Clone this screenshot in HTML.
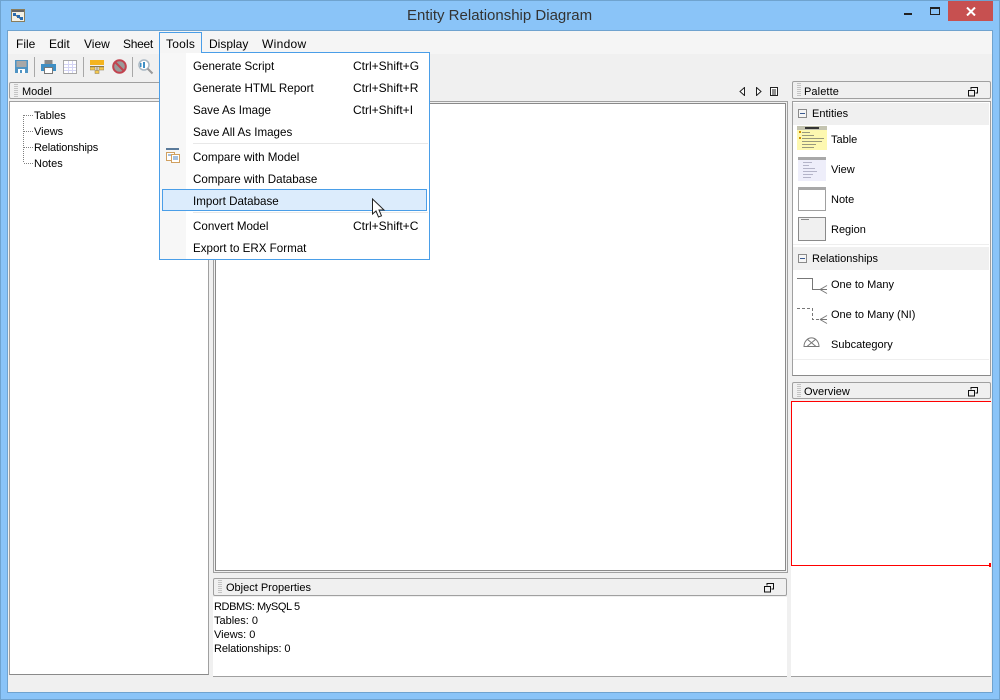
<!DOCTYPE html>
<html><head><meta charset="utf-8"><title>Entity Relationship Diagram</title>
<style>
html,body{margin:0;padding:0}
body{width:1000px;height:700px;position:relative;overflow:hidden;background:#8ac4f8;font-family:"Liberation Sans",sans-serif;font-size:12px;color:#000}
div,span,svg{position:absolute;box-sizing:border-box}
span{white-space:nowrap;line-height:16px;height:16px}
.s{font-size:11px;margin-top:1px}
.m{font-size:11.6px;margin-top:1px}
.h{background:#f0f0f0;border:1px solid #a0a0a0;border-radius:2px}
.grip{width:4px;background:repeating-linear-gradient(#c4c4c4 0 1px,#f0f0f0 1px 2px)}
.sep{width:1px;height:20px;top:57px;background:#a8a8a8}
</style></head><body>
<div style="left:0;top:0;width:1000px;height:700px;border:1px solid #6fa3cf"></div>
<svg style="left:11px;top:9px" width="14" height="13" viewBox="0 0 14 13"><rect x=".5" y=".5" width="13" height="12" fill="#f4f1e6" stroke="#8a7d5c"/><rect x="1" y="1" width="12" height="2" fill="#666"/><path d="M3 5l4 3 3 2" stroke="#444" fill="none"/><rect x="2" y="4" width="3" height="3" fill="#2a6cb0"/><rect x="6" y="6" width="3" height="3" fill="#2a6cb0"/><rect x="9" y="8" width="3" height="3" fill="#2a6cb0"/></svg>
<span style="left:407px;top:7px;font-size:15px;color:#333;line-height:18px;height:18px;letter-spacing:0">Entity Relationship Diagram</span>
<div style="left:904px;top:13px;width:8px;height:2px;background:#222"></div>
<div style="left:930px;top:7px;width:10px;height:8px;border:1px solid #222;border-top-width:2px"></div>
<div style="left:948px;top:1px;width:45px;height:20px;background:#c75050"></div>
<svg style="left:966px;top:7px" width="10" height="9" viewBox="0 0 10 9"><path d="M1 .5l8 8M9 .5l-8 8" stroke="#fff" stroke-width="2"/></svg>

<div style="left:7px;top:30px;width:986px;height:663px;background:#f0f0f0;border:1px solid #6fa3cf"></div>
<div style="left:8px;top:31px;width:984px;height:23px;background:#f5f5f5"></div>

<span style="left:16px;top:36px">File</span>
<span style="left:49px;top:36px">Edit</span>
<span style="left:84px;top:36px">View</span>
<span style="left:123px;top:36px;letter-spacing:-.3px">Sheet</span>
<span style="left:209px;top:36px">Display</span>
<span style="left:262px;top:36px;letter-spacing:.3px">Window</span>

<svg style="left:15px;top:60px" width="13" height="13" viewBox="0 0 13 13"><path d="M0 0h13v13H0z" fill="#4f94c4"/><rect x="1.500" y="1" width="10" height="6" fill="#a8a8a8"/><rect x="3" y="9" width="7" height="4" fill="#fff"/><rect x="5" y="10" width="2" height="3" fill="#4f94c4"/></svg>
<div class="sep" style="left:34px"></div>
<svg style="left:41px;top:60px" width="15" height="14" viewBox="0 0 15 14"><rect x="3.500" y="0" width="8" height="4" fill="#8a8a8a"/><rect x="0" y="4" width="15" height="7" fill="#3f8fc4"/><rect x="3.500" y="7.500" width="8" height="6" fill="#fff" stroke="#777"/></svg>
<svg style="left:63px;top:60px" width="14" height="14" viewBox="0 0 14 14"><rect x=".5" y=".5" width="13" height="13" fill="#fff" stroke="#a8a8a8"/><path d="M1 4.500h12M1 7.500h12M1 10.500h12M5.500 1v12M9.500 1v12" stroke="#d4d4f4"/></svg>
<div class="sep" style="left:83px"></div>
<svg style="left:90px;top:60px" width="14" height="14" viewBox="0 0 14 14"><rect x="0" y="0" width="14" height="5" fill="#f4b41e"/><path d="M0 6.500h14M7 6v5" stroke="#8a7a50"/><rect x="0" y="7" width="5" height="3" fill="#f4c84e" stroke="#8a7a50" stroke-width=".5"/><rect x="9" y="7" width="5" height="3" fill="#f4c84e" stroke="#8a7a50" stroke-width=".5"/><rect x="5" y="10.500" width="4" height="3" fill="#f4c84e" stroke="#8a7a50" stroke-width=".5"/></svg>
<svg style="left:112px;top:59px" width="15" height="15" viewBox="0 0 15 15"><circle cx="7.500" cy="7.500" r="6.300" fill="#9a9a9a" stroke="#c2434f" stroke-width="2"/><path d="M3 3l9 9" stroke="#c2434f" stroke-width="2"/></svg>
<div class="sep" style="left:132px"></div>
<svg style="left:138px;top:59px" width="16" height="16" viewBox="0 0 16 16"><circle cx="6" cy="6" r="5" fill="#fff" stroke="#a9b8c4" stroke-width="1.500"/><rect x="5" y="3" width="2" height="6" fill="#3f8fc4"/><rect x="2" y="4" width="1.500" height="4" fill="#3f8fc4"/><path d="M9.500 9.500l5 5" stroke="#9a9a9a" stroke-width="2"/></svg>

<!-- Model -->
<div class="h" style="left:9px;top:82px;width:155px;height:17px"></div>
<div class="grip" style="left:14px;top:84px;height:13px"></div>
<span class="s" style="left:22px;top:83px">Model</span>
<div style="left:9px;top:101px;width:200px;height:574px;background:#fff;border:1px solid #a0a0a0;border-bottom-color:#8a8a8a"></div>
<svg style="left:22px;top:112px" width="14" height="54" viewBox="0 0 14 54"><path d="M1.500 3V51M2 3.500h10M2 19.500h10M2 35.500h10M2 51.500h10" stroke="#808080" stroke-dasharray="1 1" fill="none"/></svg>
<span class="s" style="left:34px;top:107px">Tables</span>
<span class="s" style="left:34px;top:123px">Views</span>
<span class="s" style="left:34px;top:139px;letter-spacing:-.15px">Relationships</span>
<span class="s" style="left:34px;top:155px">Notes</span>

<!-- Centre -->
<svg style="left:739px;top:87px" width="40" height="9" viewBox="0 0 40 9"><path d="M5.500.5v8L1 4.500zM17.500.5v8L22 4.500z" fill="#fff" stroke="#222"/><rect x="31.500" y=".5" width="7" height="8" fill="#fff" stroke="#222"/><path d="M33 3h4M33 5h4M33 7h4" stroke="#222"/></svg>
<div style="left:213px;top:101px;width:575px;height:472px;background:#fff;border:1px solid #a0a0a0;box-shadow:inset 0 0 0 1px #f0f0f0,inset 0 0 0 2px #8a8a8a"></div>

<div class="h" style="left:213px;top:578px;width:574px;height:18px"></div>
<div class="grip" style="left:218px;top:580px;height:14px"></div>
<span class="s" style="left:226px;top:579px">Object Properties</span>
<svg style="left:764px;top:583px" width="10" height="10" viewBox="0 0 10 10"><path d="M3 2.500V.5h6.500V6H7.500" fill="none" stroke="#111"/><rect x=".5" y="3.500" width="6" height="5.500" fill="none" stroke="#111"/></svg>
<div style="left:213px;top:597px;width:574px;height:80px;background:#fff;border-bottom:1px solid #a0a0a0"></div>
<span class="s" style="left:214px;top:598px;letter-spacing:-.4px">RDBMS: MySQL 5</span>
<span class="s" style="left:214px;top:612px">Tables: 0</span>
<span class="s" style="left:214px;top:626px">Views: 0</span>
<span class="s" style="left:214px;top:640px;letter-spacing:-.12px">Relationships: 0</span>

<!-- Palette -->
<div class="h" style="left:792px;top:81px;width:199px;height:18px"></div>
<div class="grip" style="left:797px;top:83px;height:14px"></div>
<span class="s" style="left:804px;top:83px;letter-spacing:.1px">Palette</span>
<svg style="left:968px;top:87px" width="10" height="10" viewBox="0 0 10 10"><path d="M3 2.500V.5h6.500V6H7.500" fill="none" stroke="#111"/><rect x=".5" y="3.500" width="6" height="5.500" fill="none" stroke="#111"/></svg>
<div style="left:792px;top:101px;width:199px;height:275px;background:#fff;border:1px solid #a0a0a0;border-bottom-color:#8a8a8a"></div>
<div style="left:793px;top:103px;width:196px;height:22px;background:#f0f0f0"></div>
<svg style="left:798px;top:109px" width="9" height="9" viewBox="0 0 9 9"><rect x=".5" y=".5" width="8" height="8" fill="#f5f5f5" stroke="#8a8a8a"/><path d="M2 4.500h5" stroke="#3a5a90"/></svg>
<span class="s" style="left:812px;top:105px">Entities</span>

<svg style="left:797px;top:126px" width="30" height="25" viewBox="0 0 30 25"><rect width="30" height="24" fill="#fdf8b0"/><rect width="30" height="4" fill="#c4c4b0"/><rect x="8" y="1" width="14" height="2" fill="#333"/><path d="M5 6.500h8M5 9.500h12M5 12.500h22M5 15.500h20M5 18.500h14M5 21.500h12" stroke="#99997e"/><rect x="2" y="5" width="2" height="2" fill="#d09000"/><rect x="2" y="11" width="2" height="2" fill="#d09000"/></svg>
<span class="s" style="left:831px;top:131px">Table</span>
<svg style="left:798px;top:157px" width="28" height="24" viewBox="0 0 28 24"><rect width="28" height="24" fill="#eeeefa"/><rect width="28" height="3" fill="#a8a8a8"/><path d="M5 5.500h9M5 8.500h6M5 11.500h12M5 14.500h14M5 17.500h10M5 20.500h8" stroke="#b4b4c8"/></svg>
<span class="s" style="left:831px;top:161px">View</span>
<svg style="left:798px;top:187px" width="28" height="24" viewBox="0 0 28 24"><rect x=".5" y=".5" width="27" height="23" fill="#fff" stroke="#a0a0a0"/><rect width="28" height="3" fill="#a8a8a8"/></svg>
<span class="s" style="left:831px;top:191px">Note</span>
<svg style="left:798px;top:217px" width="28" height="24" viewBox="0 0 28 24"><rect x=".5" y=".5" width="27" height="23" fill="#f0f0f0" stroke="#8a8a8a"/><path d="M3 2.500h8" stroke="#8a8a8a"/></svg>
<span class="s" style="left:831px;top:221px">Region</span>
<div style="left:793px;top:244px;width:196px;height:1px;background:#eeeeee"></div>

<div style="left:793px;top:247px;width:196px;height:23px;background:#f0f0f0"></div>
<svg style="left:798px;top:254px" width="9" height="9" viewBox="0 0 9 9"><rect x=".5" y=".5" width="8" height="8" fill="#f5f5f5" stroke="#8a8a8a"/><path d="M2 4.500h5" stroke="#3a5a90"/></svg>
<span class="s" style="left:812px;top:250px">Relationships</span>
<svg style="left:797px;top:277px" width="31" height="18" viewBox="0 0 31 18"><path d="M0 1.500h15.500V12.500H30M23 12.500l7-4M23 12.500l7 4" fill="none" stroke="#777"/></svg>
<span class="s" style="left:831px;top:276px">One to Many</span>
<svg style="left:797px;top:307px" width="31" height="18" viewBox="0 0 31 18"><path d="M0 1.500h15.500V12.500H24" fill="none" stroke="#777" stroke-dasharray="3 2"/><path d="M23 12.500h7M23 12.500l7-4M23 12.500l7 4" fill="none" stroke="#777"/></svg>
<span class="s" style="left:831px;top:306px">One to Many (NI)</span>
<svg style="left:803px;top:337px" width="17" height="11" viewBox="0 0 17 11"><path d="M1 9.500a7 8 0 0 1 15 0zM4 2l9 7.500M13 2l-9 7.500" fill="none" stroke="#777"/></svg>
<span class="s" style="left:831px;top:336px">Subcategory</span>
<div style="left:793px;top:359px;width:196px;height:1px;background:#eeeeee"></div>

<!-- Overview -->
<div class="h" style="left:792px;top:382px;width:199px;height:17px"></div>
<div class="grip" style="left:797px;top:384px;height:13px"></div>
<span class="s" style="left:804px;top:383px">Overview</span>
<svg style="left:968px;top:387px" width="10" height="10" viewBox="0 0 10 10"><path d="M3 2.500V.5h6.500V6H7.500" fill="none" stroke="#111"/><rect x=".5" y="3.500" width="6" height="5.500" fill="none" stroke="#111"/></svg>
<div style="left:791px;top:401px;width:200px;height:276px;background:#fff;border-bottom:1px solid #a0a0a0"></div>
<div style="left:791px;top:401px;width:200px;height:165px;border:1px solid #f00;border-right:0"></div>
<div style="left:989px;top:563px;width:2px;height:4px;background:#f00"></div>

<!-- Tools menu -->
<div style="left:159px;top:32px;width:43px;height:21px;background:#f5f5f5;border:1px solid #4a9ee8;border-bottom:0"></div>
<span style="left:166px;top:36px;letter-spacing:.2px">Tools</span>
<div style="left:159px;top:52px;width:271px;height:208px;background:#fff;border:1px solid #4a9ee8"></div>
<div style="left:160px;top:53px;width:269px;height:206px;background:linear-gradient(90deg,#f7f7f7 0 26px,#fff 26px)"></div>
<div style="left:160px;top:52px;width:41px;height:1px;background:#f5f5f5"></div>
<span class="m" style="left:193px;top:58px">Generate Script</span><span style="left:353px;top:58px">Ctrl+Shift+G</span>
<span class="m" style="left:193px;top:80px">Generate HTML Report</span><span style="left:353px;top:80px">Ctrl+Shift+R</span>
<span class="m" style="left:193px;top:102px">Save As Image</span><span style="left:353px;top:102px">Ctrl+Shift+I</span>
<span class="m" style="left:193px;top:124px">Save All As Images</span>
<div style="left:193px;top:143px;width:235px;height:1px;background:#e8e8e8"></div>
<svg style="left:166px;top:148px" width="14" height="15" viewBox="0 0 14 15"><path d="M0 1h13" stroke="#5a7a9a" stroke-width="2"/><rect x=".5" y="4.500" width="8" height="8" fill="#fff" stroke="#d0a060"/><rect x="5.500" y="6.500" width="8" height="8" fill="#fff" stroke="#d0a060"/><path d="M7 9h5M7 11h5M2 7h3" stroke="#4a80c0"/></svg>
<span class="m" style="left:193px;top:149px">Compare with Model</span>
<span class="m" style="left:193px;top:171px">Compare with Database</span>
<div style="left:162px;top:189px;width:265px;height:22px;background:#dcecfc;border:1px solid #4a9ee8"></div>
<span class="m" style="left:193px;top:193px">Import Database</span>
<div style="left:193px;top:212px;width:235px;height:1px;background:#e8e8e8"></div>
<span class="m" style="left:193px;top:218px">Convert Model</span><span style="left:353px;top:218px">Ctrl+Shift+C</span>
<span class="m" style="left:193px;top:240px">Export to ERX Format</span>
<svg style="left:371px;top:198px" width="15" height="21" viewBox="0 0 15 21"><path d="M1.500 1v15l3.500-3 2.500 6 3-1.200-2.500-5.800h5z" fill="#fff" stroke="#222"/></svg>
</body></html>
